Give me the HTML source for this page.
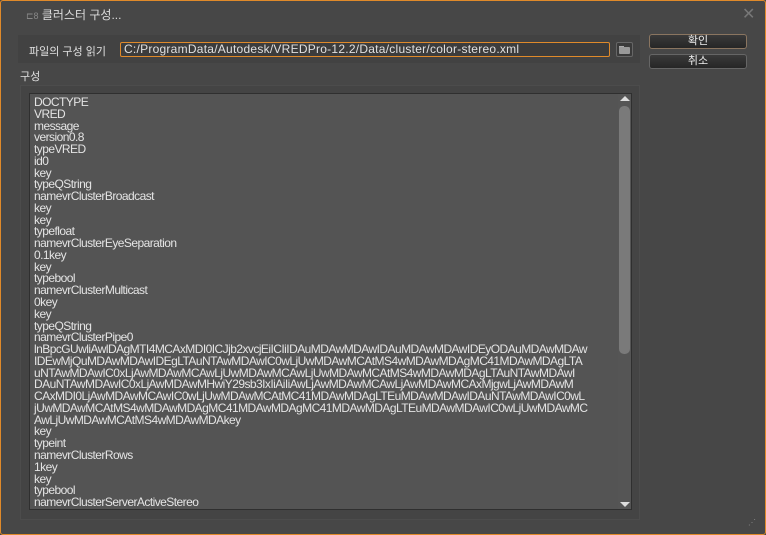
<!DOCTYPE html>
<html><head><meta charset="utf-8"><style>
*{margin:0;padding:0;box-sizing:border-box}
body{width:766px;height:535px;background:#474747;font-family:"Liberation Sans","Noto Sans CJK KR",sans-serif;color:#e0e0e0;overflow:hidden;position:relative}
.win{position:absolute;left:0;top:0;width:766px;height:535px;border:1px solid #e08a2a;border-radius:3px}
.abs{position:absolute}
.title{left:26px;top:6px;font-size:12px;color:#ddd}
.close{left:742px;top:4px;font-size:16px;color:#777}
.grp1{left:18px;top:35px;width:622px;height:28px;background:#424242}
.inp{left:120px;top:42px;width:490px;height:15px;border:1px solid #e08a2a;border-radius:2px;background:#3c3c3c;font-size:12px;line-height:13px;padding-left:3px;letter-spacing:0.25px;white-space:nowrap;overflow:hidden}
.btn{width:98px;height:15px;border:1px solid #666;border-radius:3px;background:linear-gradient(#3a3a3a,#262626);font-size:11px;text-align:center;line-height:13px;color:#eee}
.grp2{left:20px;top:85px;width:620px;height:435px;background:#444;border:1px solid #4c4c4c}
.ta{left:29px;top:93px;width:603px;height:417px;background:#545454;border:1px solid #2f2f2f;overflow:hidden}
.txt{position:absolute;left:4px;top:3px;font-size:12px;line-height:11.76px;letter-spacing:-0.55px;white-space:pre;color:#e4e4e4}
.sb{left:618px;top:94px;width:13px;height:415px;background:#555}
.thumb{left:619px;top:106px;width:11px;height:248px;background:#7a7a7a;border-radius:5px}
</style></head><body>
<div class="win"></div>
<div class="abs title"><span style="color:#888;font-size:9px">⊏8</span> 클러스터 구성...</div>
<div class="abs close">✕</div>
<div class="abs grp1"></div>
<div class="abs" style="left:29px;top:43px;font-size:11px">파일의 구성 읽기</div>
<div class="abs inp">C:/ProgramData/Autodesk/VREDPro-12.2/Data/cluster/color-stereo.xml</div>
<div class="abs" style="left:616px;top:42px;width:17px;height:15px;border:1px solid #666;border-radius:2px;background:#3a3a3a"><div style="position:absolute;left:2px;top:3px;width:5px;height:2px;background:#aaa"></div><div style="position:absolute;left:2px;top:4px;width:11px;height:7px;background:#999;border-radius:1px"></div></div>
<div class="abs btn" style="left:649px;top:34px;border-color:#8a7560">확인</div>
<div class="abs btn" style="left:649px;top:54px">취소</div>
<div class="abs" style="left:20px;top:68px;font-size:11px">구성</div>
<div class="abs grp2"></div>
<div class="abs ta"><div class="txt">DOCTYPE
VRED
message
version0.8
typeVRED
id0
key
typeQString
namevrClusterBroadcast
key
key
typefloat
namevrClusterEyeSeparation
0.1key
key
typebool
namevrClusterMulticast
0key
key
typeQString
namevrClusterPipe0
lnBpcGUwliAwlDAgMTI4MCAxMDI0ICJjb2xvcjEiICIiIDAuMDAwMDAwIDAuMDAwMDAwIDEyODAuMDAwMDAw
IDEwMjQuMDAwMDAwIDEgLTAuNTAwMDAwIC0wLjUwMDAwMCAtMS4wMDAwMDAgMC41MDAwMDAgLTA
uNTAwMDAwIC0xLjAwMDAwMCAwLjUwMDAwMCAwLjUwMDAwMCAtMS4wMDAwMDAgLTAuNTAwMDAwI
DAuNTAwMDAwIC0xLjAwMDAwMHwiY29sb3IxIiAiIiAwLjAwMDAwMCAwLjAwMDAwMCAxMjgwLjAwMDAwM
CAxMDI0LjAwMDAwMCAwIC0wLjUwMDAwMCAtMC41MDAwMDAgLTEuMDAwMDAwIDAuNTAwMDAwIC0wL
jUwMDAwMCAtMS4wMDAwMDAgMC41MDAwMDAgMC41MDAwMDAgLTEuMDAwMDAwIC0wLjUwMDAwMC
AwLjUwMDAwMCAtMS4wMDAwMDAkey
key
typeint
namevrClusterRows
1key
key
typebool
namevrClusterServerActiveStereo</div></div>
<div class="abs sb"></div>
<div class="abs thumb"></div>
<div class="abs" style="left:620px;top:96px;width:0;height:0;border-left:5px solid transparent;border-right:5px solid transparent;border-bottom:5px solid #ddd"></div>
<div class="abs" style="left:620px;top:502px;width:0;height:0;border-left:5px solid transparent;border-right:5px solid transparent;border-top:5px solid #ddd"></div>
<div class="abs" style="left:748px;top:518px;font-size:8px;color:#888">⋰</div>
</body></html>
